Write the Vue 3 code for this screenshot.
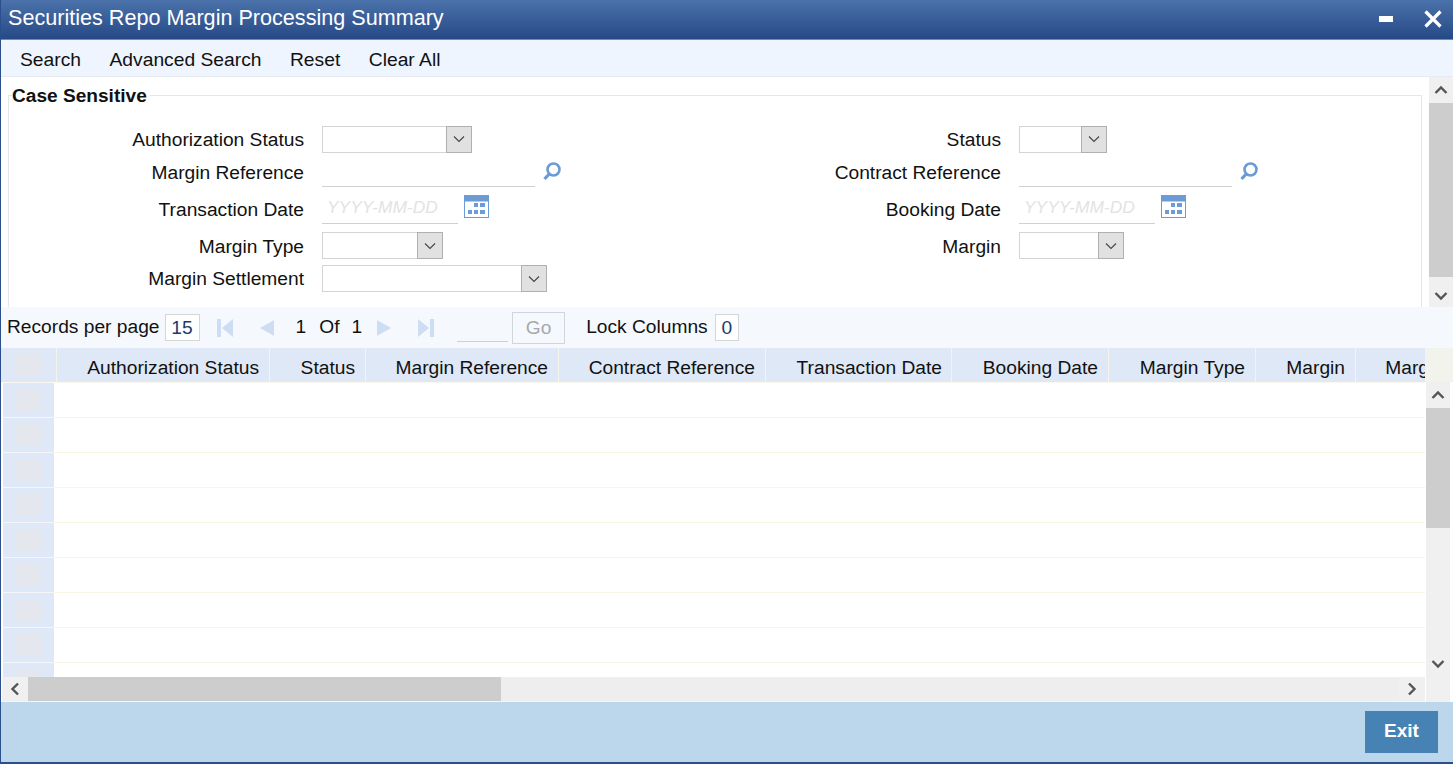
<script setup>
const leftLabels = ['Authorization Status','Margin Reference','Transaction Date','Margin Type','Margin Settlement']
const cols = [
  { t: 'Authorization Status', w: 213 },
  { t: 'Status', w: 96 },
  { t: 'Margin Reference', w: 193 },
  { t: 'Contract Reference', w: 207 },
  { t: 'Transaction Date', w: 186 },
  { t: 'Booking Date', w: 157 },
  { t: 'Margin Type', w: 147 },
  { t: 'Margin', w: 100 },
  { t: 'Margin Settlement', w: 196 }
]
const rows = Array.from({ length: 9 }, (_, i) => i)
</script>

<template>
  <div class="window">
    <header class="title">
      <span class="title-text">Securities Repo Margin Processing Summary</span>
      <span class="min"></span>
      <svg class="close" width="20" height="20" viewBox="0 0 20 20"><path d="M2.5 2.5 L17.5 17.5 M17.5 2.5 L2.5 17.5" stroke="#fff" stroke-width="3.2" fill="none"/></svg>
    </header>

    <nav class="toolbar">
      <span>Search</span><span>Advanced Search</span><span>Reset</span><span>Clear All</span>
    </nav>

    <section class="form-area">
      <div class="form-main">
        <div class="legend">Case Sensitive</div>
        <div class="fieldset">
          <div class="frow r1">
            <label>{{ leftLabels[0] }}</label>
            <div class="ctrl"><div class="select" style="width:150px"><i><svg width="12" height="8" viewBox="0 0 12 8"><path d="M1 1.5 L6 6.5 L11 1.5" fill="none" stroke="#444" stroke-width="1.1"/></svg></i></div></div>
            <label>Status</label>
            <div class="ctrl"><div class="select" style="width:88px"><i><svg width="12" height="8" viewBox="0 0 12 8"><path d="M1 1.5 L6 6.5 L11 1.5" fill="none" stroke="#444" stroke-width="1.1"/></svg></i></div></div>
          </div>
          <div class="frow r2">
            <label>{{ leftLabels[1] }}</label>
            <div class="ctrl"><div class="line" style="width:213px"></div><svg class="lens" width="20" height="20" viewBox="0 0 20 20"><circle cx="11.5" cy="8.5" r="6" fill="none" stroke="#6b9ad6" stroke-width="2.6"/><path d="M7.2 13 L2.5 18" stroke="#6b9ad6" stroke-width="3.2" fill="none"/></svg></div>
            <label>Contract Reference</label>
            <div class="ctrl"><div class="line" style="width:213px"></div><svg class="lens" width="20" height="20" viewBox="0 0 20 20"><circle cx="11.5" cy="8.5" r="6" fill="none" stroke="#6b9ad6" stroke-width="2.6"/><path d="M7.2 13 L2.5 18" stroke="#6b9ad6" stroke-width="3.2" fill="none"/></svg></div>
          </div>
          <div class="frow r3">
            <label>{{ leftLabels[2] }}</label>
            <div class="ctrl"><div class="line date" style="width:136px">YYYY-MM-DD</div><svg class="cal" width="25" height="23" viewBox="0 0 25 23"><path d="M0 0H25V23H0Z" fill="#6c9bd6"/><path d="M1 6.5H24V22H1Z" fill="#fff"/><path d="M10 8h4v4h-4zM16 8h5v4h-5zM4 15h4v4H4zM10 15h4v4h-4zM16 15h5v4h-5z" fill="#6c9bd6"/></svg></div>
            <label>Booking Date</label>
            <div class="ctrl"><div class="line date" style="width:136px">YYYY-MM-DD</div><svg class="cal" width="25" height="23" viewBox="0 0 25 23"><path d="M0 0H25V23H0Z" fill="#6c9bd6"/><path d="M1 6.5H24V22H1Z" fill="#fff"/><path d="M10 8h4v4h-4zM16 8h5v4h-5zM4 15h4v4H4zM10 15h4v4h-4zM16 15h5v4h-5z" fill="#6c9bd6"/></svg></div>
          </div>
          <div class="frow r4">
            <label>{{ leftLabels[3] }}</label>
            <div class="ctrl"><div class="select" style="width:121px"><i><svg width="12" height="8" viewBox="0 0 12 8"><path d="M1 1.5 L6 6.5 L11 1.5" fill="none" stroke="#444" stroke-width="1.1"/></svg></i></div></div>
            <label>Margin</label>
            <div class="ctrl"><div class="select" style="width:105px"><i><svg width="12" height="8" viewBox="0 0 12 8"><path d="M1 1.5 L6 6.5 L11 1.5" fill="none" stroke="#444" stroke-width="1.1"/></svg></i></div></div>
          </div>
          <div class="frow r5">
            <label>{{ leftLabels[4] }}</label>
            <div class="ctrl"><div class="select" style="width:225px"><i><svg width="12" height="8" viewBox="0 0 12 8"><path d="M1 1.5 L6 6.5 L11 1.5" fill="none" stroke="#444" stroke-width="1.1"/></svg></i></div></div>
          </div>
        </div>
      </div>
      <div class="vbar form-bar">
        <div class="btn up"><svg width="14" height="10" viewBox="0 0 14 10"><path d="M1.5 8 L7 2.5 L12.5 8" fill="none" stroke="#555" stroke-width="2.4"/></svg></div>
        <div class="thumb"></div>
        <div class="track"></div>
        <div class="btn dn"><svg width="14" height="10" viewBox="0 0 14 10"><path d="M1.5 2 L7 7.5 L12.5 2" fill="none" stroke="#555" stroke-width="2.4"/></svg></div>
      </div>
    </section>

    <section class="pager">
      <span class="plabel">Records per page</span>
      <span class="box b15">15</span>
      <svg class="pi first" width="16" height="18" viewBox="0 0 16 18"><path d="M0 0H4V18H0ZM16 0V18L5 9Z" fill="#cdddf3"/></svg>
      <svg class="pi prev" width="14" height="16" viewBox="0 0 14 16"><path d="M14 0V16L0 8Z" fill="#cdddf3"/></svg>
      <span class="pnum n1">1</span><span class="pnum of">Of</span><span class="pnum n2">1</span>
      <svg class="pi next" width="14" height="16" viewBox="0 0 14 16"><path d="M0 0V16L14 8Z" fill="#cdddf3"/></svg>
      <svg class="pi last" width="16" height="18" viewBox="0 0 16 18"><path d="M12 0H16V18H12ZM0 0V18L11 9Z" fill="#cdddf3"/></svg>
      <span class="pline"></span>
      <span class="go">Go</span>
      <span class="plabel lock">Lock Columns</span>
      <span class="box b0">0</span>
    </section>

    <section class="grid">
      <div class="grid-left">
        <div class="thead">
          <div class="th-check"><b></b></div>
          <div v-for="c in cols" :key="c.t" class="th" :style="{ flexBasis: c.w + 'px' }">{{ c.t }}</div>
        </div>
        <div class="tbody">
          <div v-for="r in rows" :key="r" class="tr">
            <div class="rh"><b></b></div>
            <div class="td"></div>
          </div>
        </div>
        <div class="hbar">
          <div class="hbtn"><svg width="10" height="14" viewBox="0 0 10 14"><path d="M8 1.5 L2.5 7 L8 12.5" fill="none" stroke="#555" stroke-width="2.4"/></svg></div>
          <div class="hthumb"></div>
          <div class="htrack"></div>
          <div class="hbtn r"><svg width="10" height="14" viewBox="0 0 10 14"><path d="M2 1.5 L7.5 7 L2 12.5" fill="none" stroke="#555" stroke-width="2.4"/></svg></div>
        </div>
      </div>
      <div class="grid-right">
        <div class="corner"></div>
        <div class="vbar grid-bar">
          <div class="btn up"><svg width="14" height="10" viewBox="0 0 14 10"><path d="M1.5 8 L7 2.5 L12.5 8" fill="none" stroke="#555" stroke-width="2.4"/></svg></div>
          <div class="thumb"></div>
          <div class="track"></div>
          <div class="btn dn"><svg width="14" height="10" viewBox="0 0 14 10"><path d="M1.5 2 L7 7.5 L12.5 2" fill="none" stroke="#555" stroke-width="2.4"/></svg></div>
        </div>
      </div>
    </section>

    <footer class="footer"><button class="exit">Exit</button></footer>
  </div>
</template>

<style>
html, body { margin: 0; background: #fff; }
</style>

<style scoped>
.window {
  width: 1453px; height: 764px; box-sizing: border-box;
  border-left: 1px solid #2b4f8c; border-bottom: 2px solid #2b4f8c;
  display: flex; flex-direction: column; overflow: hidden;
  font-family: "Liberation Sans", Arial, sans-serif; color: #111; background: #fff;
}
.title {
  height: 40px; flex: none; box-sizing: border-box; margin-left: -1px;
  background: linear-gradient(#4b72ab, #254985);
  border-bottom: 1px solid #6d8db5;
  display: flex; align-items: center; padding: 0 10px 2px 8px;
}
.title-text { color: #fff; font-size: 21.6px; flex: 1; padding-bottom: 2px; }
.min { width: 14px; height: 6px; background: #fff; margin-right: 30px; margin-top: 1px; }
.toolbar {
  height: 37px; flex: none; box-sizing: border-box; background: #eef5fe;
  border-bottom: 1px solid #e6ebf2;
  display: flex; align-items: center; padding: 3px 0 0 19px; gap: 28.5px; font-size: 19.25px;
}
.form-area { height: 230px; flex: none; display: flex; overflow: hidden; }
.form-main { width: 1427px; flex: none; padding-left: 7px; box-sizing: border-box; position: relative; }
.legend {
  position: absolute; left: 11px; top: 8px; font-weight: bold; font-size: 19.1px; line-height: 21px;
  background: #fff; padding-right: 3px;
}
.fieldset {
  margin-top: 18px; width: 1414px; height: 240px; box-sizing: border-box;
  border: 1px solid #e4e6ec; padding-top: 29px;
}
.frow { display: grid; grid-template-columns: 295px 401px 296px 1fr; align-items: center; font-size: 19.2px; }
.frow label { text-align: right; padding-top: 2px; }
.frow.r3 label { padding-top: 3px; }
.frow.r5 label { padding-top: 0; }
.ctrl { padding-left: 18px; display: flex; align-items: center; }
.r1 { height: 28px; }
.r2 { height: 38px; }
.r3 { height: 35px; }
.r4 { height: 39px; }
.r5 { height: 27px; }
.select {
  height: 27px; box-sizing: border-box; border: 1px solid #d4d4d4; background: #fff;
  display: flex; justify-content: flex-end;
}
.select i {
  width: 26px; box-sizing: border-box; background: #e1e1e1; border: 1px solid #b0b0b0;
  display: flex; align-items: center; justify-content: center; margin: -1px -1px -1px 0;
}
.line { height: 29px; box-sizing: border-box; border-bottom: 1px solid #d0d0d0; }
.date { height: 31px; color: #e3e3e3; font-style: italic; font-size: 17.4px; padding: 4px 0 0 5px; }
.lens { margin: -2px 0 0 7px; }
.cal { margin: -4px 0 0 6px; }
.vbar { display: flex; flex-direction: column; background: #f0f0f0; }
.vbar .btn { display: flex; align-items: center; justify-content: center; flex: none; }
.vbar .thumb { background: #cdcdcd; flex: none; }
.vbar .track { flex: 1; }
.form-bar { width: 24px; margin-left: 1px; }
.form-bar .up { height: 26px; }
.form-bar .thumb { height: 174px; }
.form-bar .dn { height: 23px; }
.pager {
  height: 41px; flex: none; box-sizing: border-box; background: #f5f9fe;
  font-size: 19.2px; display: flex; align-items: center; padding-left: 6px;
}
.plabel, .pnum { white-space: nowrap; padding-bottom: 2px; }
.box {
  height: 27px; box-sizing: border-box; background: #fff; border: 1px solid #d6d6d6;
  color: #1c3a6e; display: flex; align-items: center; justify-content: center;
}
.b15 { width: 35px; margin-left: 5px; }
.b0 { width: 24px; margin-left: 7px; }
.pi { flex: none; }
.first { margin-left: 17px; }
.prev { margin-left: 27px; }
.n1 { margin-left: 22px; }
.of { margin-left: 13px; }
.n2 { margin-left: 12px; }
.next { margin-left: 15px; }
.last { margin-left: 27px; }
.pline { width: 51px; height: 29px; border-bottom: 1px solid #d0d0d0; margin-left: 23px; box-sizing: border-box; }
.go {
  width: 53px; height: 32px; box-sizing: border-box; border: 1px solid #d2d6dc; color: #a8a8a8;
  display: flex; align-items: center; justify-content: center; margin-left: 4px;
}
.lock { margin-left: 21px; }
.grid { height: 354px; flex: none; display: flex; background: #fff; }
.grid-left { width: 1424px; flex: none; display: flex; flex-direction: column; overflow: hidden; }
.thead {
  height: 35px; flex: none; box-sizing: border-box; display: flex; background: #dee8f6;
  padding-left: 1px; font-size: 19.2px; overflow: hidden; border-bottom: 1px solid #fbf8f0;
}
.th-check { width: 55px; flex: none; box-sizing: border-box; border-right: 1px solid #f6f3ea; display: flex; align-items: center; justify-content: center; }
.th-check b, .rh b { display: block; width: 26px; height: 22px; background: #e4e7ee; }
.th {
  flex: none; box-sizing: border-box; text-align: right; line-height: 39px; padding-right: 10px;
  border-right: 1px solid #f6f3ea; white-space: nowrap;
}
.th:nth-child(6) { padding-right: 9px; }
.tbody { flex: 1; overflow: hidden; min-height: 0; }
.tr { height: 35px; display: flex; box-sizing: border-box; }
.rh {
  width: 51px; margin-left: 2px; flex: none; box-sizing: border-box; background: #dee8f6;
  border-bottom: 1px solid #f4f6fb; display: flex; align-items: center; justify-content: center;
}
.td { flex: 1; border-bottom: 1px solid #f8f6e2; }
.hbar { height: 24px; flex: none; display: flex; background: #eeeeee; margin-left: 1px; border-bottom: 1px solid #f4f6f8; box-sizing: content-box; }
.hbtn { width: 26px; flex: none; display: flex; align-items: center; justify-content: center; background: #f0f0f0; }
.hthumb { width: 473px; background: #cdcdcd; flex: none; }
.htrack { flex: 1; }
.grid-right { flex: 1; display: flex; flex-direction: column; background: #fff; }
.corner { height: 34px; flex: none; background: #f3f3ee; }
.grid-bar { width: 24px; flex: 1; margin-left: 1px; min-height: 0; }
.grid-bar .up { height: 26px; }
.grid-bar .thumb { height: 120px; }
.grid-bar .dn { height: 27px; margin-bottom: 25px; }
.footer {
  flex: 1; background: #bcd7ec; display: flex; justify-content: flex-end; align-items: flex-start;
  padding: 9px 15px 0 0;
}
.exit {
  width: 73px; height: 42px; border: 0; background: #4682b4; color: #fff;
  font: bold 19px "Liberation Sans", Arial, sans-serif; padding: 0 0 2px;
}
</style>
